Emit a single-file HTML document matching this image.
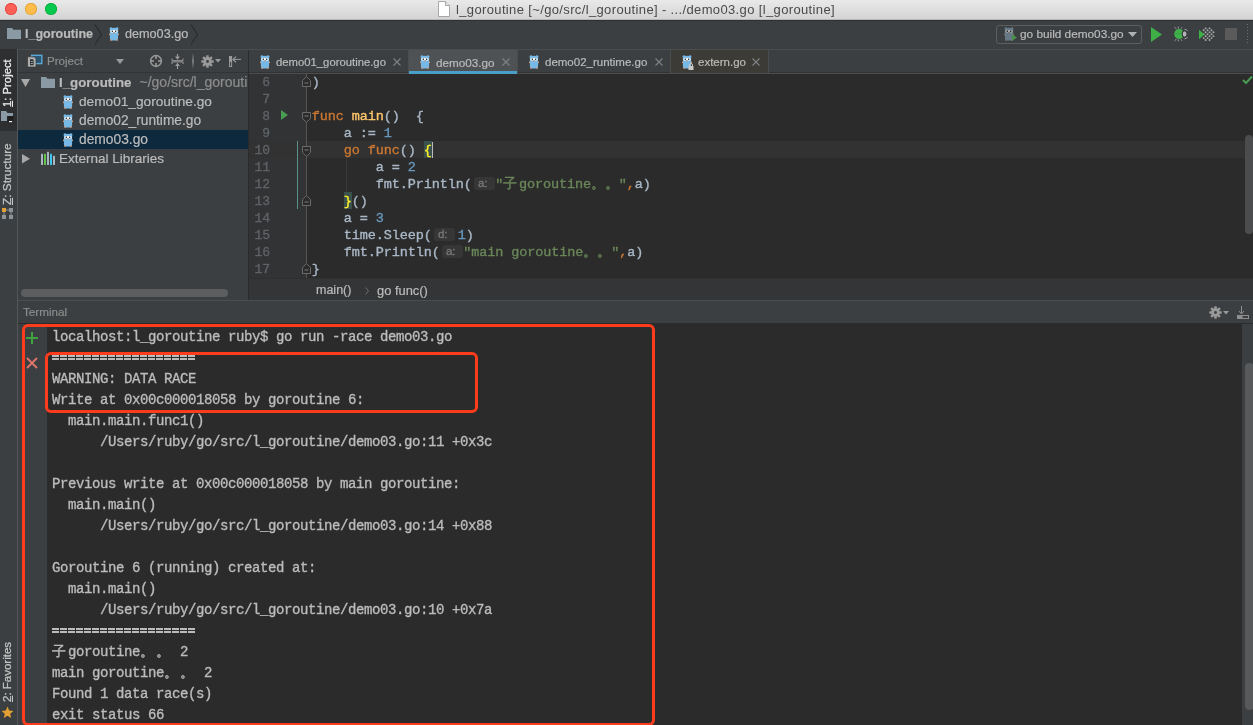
<!DOCTYPE html>
<html><head><meta charset="utf-8">
<style>
*{margin:0;padding:0;box-sizing:border-box}
html,body{width:1253px;height:725px;overflow:hidden;background:#3c3f41;font-family:"Liberation Sans",sans-serif}
.a{position:absolute}
.t{position:absolute;white-space:pre;-webkit-text-stroke:0.2px currentColor}
.m{font-family:"Liberation Mono",monospace}
.code{position:absolute;-webkit-text-stroke:0.35px currentColor;left:311.7px;font-family:"Liberation Mono",monospace;font-size:13.5px;letter-spacing:-0.1px;height:17px;line-height:17px;white-space:pre;color:#a9b7c6}
.ln{position:absolute;-webkit-text-stroke:0.3px currentColor;left:249px;width:21px;text-align:right;font-family:"Liberation Mono",monospace;font-size:13px;height:17px;line-height:17px;color:#606366}
.k{color:#cc7832}.fn{color:#ffc66d}.n{color:#6897bb}.s{color:#6a8759}
.cj{display:inline-block;width:13.9px;text-align:left}.cz{display:inline-block;width:15.7px;text-align:left}
.hint{display:inline-block;width:23.6px;height:13px;position:relative;vertical-align:top}.hint.hd{width:26.1px}.hint.hd b{width:21.4px}
.hint b{position:absolute;left:2.3px;top:1px;width:20.5px;height:13px;border-radius:3px;background:#363636;font-weight:normal;font-family:"Liberation Sans",sans-serif;font-size:11.5px;line-height:13px;color:#787878;padding-left:4px}
.term{position:absolute;-webkit-text-stroke:0.35px currentColor;left:52px;font-family:"Liberation Mono",monospace;font-size:14px;letter-spacing:-0.4px;height:21px;line-height:21px;white-space:pre;color:#bbbbbb}
.tj{display:inline-block;width:16px}
</style></head><body><div id="root" style="position:absolute;left:0;top:0;width:1253px;height:725px;will-change:transform">
<svg width="0" height="0" style="position:absolute">
<defs>
<symbol id="gopher" viewBox="0 0 10 14">
<path d="M1.6 0.3 Q3 0.2 3.3 1 Q5 0.6 6.7 1 Q7 0.2 8.4 0.3 Q9.8 0.6 9.4 2.2 Q9.3 2.6 9.1 2.8 V11 Q9.1 13.6 6.5 13.6 H3.5 Q0.9 13.6 0.9 11 V2.8 Q0.7 2.6 0.6 2.2 Q0.2 0.6 1.6 0.3Z" fill="#76b8e6"/>
<ellipse cx="0.6" cy="7.3" rx="0.7" ry="0.9" fill="#d9a07e"/>
<ellipse cx="9.4" cy="7.3" rx="0.7" ry="0.9" fill="#d9a07e"/>
<ellipse cx="2" cy="13.1" rx="0.9" ry="0.8" fill="#d9a07e"/>
<ellipse cx="8" cy="13.1" rx="0.9" ry="0.8" fill="#d9a07e"/>
<ellipse cx="3" cy="4.2" rx="1.7" ry="1.5" fill="#e8f2f8"/>
<ellipse cx="7" cy="4.2" rx="1.7" ry="1.5" fill="#e8f2f8"/>
<rect x="4.2" y="3" width="1.6" height="2.4" fill="#ffffff"/>
<circle cx="3.3" cy="4.3" r="0.7" fill="#111"/>
<circle cx="6.7" cy="4.3" r="0.7" fill="#111"/>
<ellipse cx="5" cy="5.8" rx="1" ry="0.7" fill="#b89a88"/>
</symbol>
<symbol id="fold" viewBox="0 0 10 11">
<path d="M0.5 0.5 H8.5 V6.5 L4.5 10.3 L0.5 6.5 Z" fill="#2b2b2b" stroke="#6b6b6b" stroke-width="1"/>
<path d="M2.5 4 H6.5" stroke="#7a7a7a" stroke-width="1"/>
</symbol>
<symbol id="foldup" viewBox="0 0 10 11">
<path d="M0.5 10.5 H8.5 V4.5 L4.5 0.7 L0.5 4.5 Z" fill="#2b2b2b" stroke="#6b6b6b" stroke-width="1"/>
<path d="M2.5 7 H6.5" stroke="#7a7a7a" stroke-width="1"/>
</symbol>
<symbol id="gear" viewBox="-6.5 -6.5 13 13"><g fill="#9a9a9a"><circle r="4.4"/><rect x="-1.2" y="-6.2" width="2.4" height="2.6" transform="rotate(0)"/><rect x="-1.2" y="-6.2" width="2.4" height="2.6" transform="rotate(45)"/><rect x="-1.2" y="-6.2" width="2.4" height="2.6" transform="rotate(90)"/><rect x="-1.2" y="-6.2" width="2.4" height="2.6" transform="rotate(135)"/><rect x="-1.2" y="-6.2" width="2.4" height="2.6" transform="rotate(180)"/><rect x="-1.2" y="-6.2" width="2.4" height="2.6" transform="rotate(225)"/><rect x="-1.2" y="-6.2" width="2.4" height="2.6" transform="rotate(270)"/><rect x="-1.2" y="-6.2" width="2.4" height="2.6" transform="rotate(315)"/></g><circle r="1.4" fill="#3c3f41"/></symbol></defs>
</svg>

<!-- ================= title bar ================= -->
<div class="a" style="left:0;top:0;width:1253px;height:20px;background:linear-gradient(#e9e9e9,#d4d4d4);border-bottom:1px solid #b9b9b9"></div>
<div class="a" style="left:5px;top:3px;width:12px;height:12px;border-radius:50%;background:#fe5f57;box-shadow:inset 0 0 0 0.8px #e0443e"></div>
<div class="a" style="left:25px;top:3px;width:12px;height:12px;border-radius:50%;background:#febc4b;box-shadow:inset 0 0 0 0.8px #de9f34"></div>
<div class="a" style="left:45px;top:3px;width:12px;height:12px;border-radius:50%;background:#05c94f;box-shadow:inset 0 0 0 0.8px #12a83a"></div>
<svg class="a" style="left:438px;top:1px" width="12" height="16" viewBox="0 0 12 16"><path d="M0.5 0.5 H7.5 L11.5 4.5 V15.5 H0.5 Z" fill="#fff" stroke="#a8a8a8"/><path d="M7.5 0.5 V4.5 H11.5" fill="#e8e8e8" stroke="#a8a8a8"/></svg>
<div class="t" style="left:456px;top:-0.5px;height:19px;line-height:19px;font-size:13px;letter-spacing:0.36px;color:#4a4a4a;-webkit-text-stroke:0">l_goroutine [~/go/src/l_goroutine] - .../demo03.go [l_goroutine]</div>

<!-- ================= nav bar ================= -->
<div class="a" style="left:0;top:20px;width:1253px;height:29px;background:#3c3f41;border-top:1px solid #2e3032"></div><div class="a" style="left:18px;top:49px;width:1235px;height:1px;background:#4a4c4e"></div>
<svg class="a" style="left:7px;top:28px" width="14" height="11" viewBox="0 0 14 11"><path d="M0 0 H5 L6.5 1.8 H14 V11 H0 Z" fill="#8a9aa4"/></svg>
<div class="t" style="left:25px;top:20px;height:28px;line-height:28px;font-size:12.5px;font-weight:bold;color:#bbbbbb">l_goroutine</div>
<svg class="a" style="left:94px;top:24px" width="9" height="21" viewBox="0 0 9 21"><path d="M1 0.5 L7.5 10.5 L1 20.5" fill="none" stroke="#2a2c2d" stroke-width="1.2"/></svg>
<svg class="a" style="left:109px;top:27px" width="10" height="14"><use href="#gopher"/></svg>
<div class="t" style="left:125px;top:20px;height:28px;line-height:28px;font-size:12.65px;color:#bbbbbb">demo03.go</div>
<svg class="a" style="left:190px;top:24px" width="9" height="21" viewBox="0 0 9 21"><path d="M1 0.5 L7.5 10.5 L1 20.5" fill="none" stroke="#2a2c2d" stroke-width="1.2"/></svg>

<!-- run config -->
<div class="a" style="left:996px;top:25px;width:146px;height:19px;border:1px solid #5c5e60;border-radius:3px;background:#3c3f41"></div>
<svg class="a" style="left:1004px;top:27px;filter:saturate(0.45) brightness(0.68)" width="10" height="14"><use href="#gopher"/></svg>
<svg class="a" style="left:1012px;top:34px" width="5" height="7" viewBox="0 0 5 7"><path d="M0 0 L5 3.5 L0 7Z" fill="#4a8f4c"/></svg>
<div class="t" style="left:1020px;top:25px;height:19px;line-height:19px;font-size:11.8px;color:#bbbbbb">go build demo03.go</div>
<svg class="a" style="left:1128px;top:32px" width="9" height="5" viewBox="0 0 9 5"><path d="M0 0 H9 L4.5 5Z" fill="#afb1b3"/></svg>
<svg class="a" style="left:1151px;top:26.5px" width="11" height="15" viewBox="0 0 11 15"><path d="M0 0 L11 7.5 L0 15Z" fill="#3fae46"/></svg>
<svg class="a" style="left:1173px;top:26px" width="16" height="16" viewBox="0 0 16 16"><g stroke="#a8a8a8" stroke-width="0.9" fill="none"><path d="M1.5 1.2 L3.5 3 M5.3 0.6 V2.6 M9 1.2 L8 2.6 M1.5 14.8 L3.5 13 M5.3 15.4 V13.4 M9 14.8 L8 13.4"/><path d="M11.5 3.2 Q13.8 3.4 14.6 5 M11.5 12.8 Q13.8 12.6 14.6 11"/></g><circle cx="6.2" cy="8" r="5" fill="#3fb14a"/><path d="M1.3 7.6 H10" stroke="#35963e" stroke-width="0.6"/><ellipse cx="11.3" cy="8" rx="2.6" ry="3.4" fill="#2f3133"/><ellipse cx="11.6" cy="8" rx="1.9" ry="2.7" fill="#b4b4b4"/></svg>
<svg class="a" style="left:1199px;top:26.5px" width="16" height="15" viewBox="0 0 16 15"><g fill="#acacac"><circle cx="6.65" cy="1.35" r="0.95"/><circle cx="4.70" cy="3.30" r="0.95"/><circle cx="10.55" cy="1.35" r="0.95"/><circle cx="8.60" cy="3.30" r="0.95"/><circle cx="6.65" cy="5.25" r="0.95"/><circle cx="4.70" cy="7.20" r="0.95"/><circle cx="12.50" cy="3.30" r="0.95"/><circle cx="10.55" cy="5.25" r="0.95"/><circle cx="8.60" cy="7.20" r="0.95"/><circle cx="6.65" cy="9.15" r="0.95"/><circle cx="4.70" cy="11.10" r="0.95"/><circle cx="14.45" cy="5.25" r="0.95"/><circle cx="12.50" cy="7.20" r="0.95"/><circle cx="10.55" cy="9.15" r="0.95"/><circle cx="8.60" cy="11.10" r="0.95"/><circle cx="6.65" cy="13.05" r="0.95"/><circle cx="14.45" cy="9.15" r="0.95"/><circle cx="12.50" cy="11.10" r="0.95"/><circle cx="10.55" cy="13.05" r="0.95"/></g><path d="M0 2.8 L5.6 7.5 L0 12.2Z" fill="#3fae46"/></svg>
<div class="a" style="left:1225px;top:28px;width:12px;height:12px;background:#5a5a5a"></div>
<div class="a" style="left:1247px;top:24px;width:1px;height:21px;background:repeating-linear-gradient(#6e6e6e 0 1px,transparent 1px 3px)"></div>

<!-- ================= left strip ================= -->
<div class="a" style="left:0;top:49px;width:17px;height:676px;background:#3c3f41"></div>
<div class="a" style="left:17px;top:49px;width:1px;height:676px;background:#545658"></div>
<div class="a" style="left:0;top:49px;width:17px;height:82px;background:#2d2f30"></div>
<div class="t" style="left:3px;top:107px;width:47px;height:9px;transform-origin:0 0;transform:rotate(-90deg);font-size:11.3px;line-height:9px;color:#e8e8e8;-webkit-text-stroke:0.3px currentColor"><u style="text-decoration-thickness:1px;text-underline-offset:1px">1</u>: Project</div>
<svg class="a" style="left:0px;top:110px" width="15" height="14" viewBox="0 0 15 14"><path d="M1 1 H6 L7.5 3 H13 V6 H7 V11 H1Z" fill="#8a9aa4"/><rect x="7.5" y="6" width="6" height="6.5" fill="#1e1e1e"/><rect x="9" y="11" width="3.2" height="1.2" fill="#ffffff"/></svg>
<div class="t" style="left:3px;top:205px;width:62px;height:9px;transform-origin:0 0;transform:rotate(-90deg);font-size:11.8px;line-height:9px;color:#c4c4c4;-webkit-text-stroke:0.25px currentColor"><u style="text-decoration-thickness:1px;text-underline-offset:1px">Z</u>: Structure</div>
<svg class="a" style="left:2px;top:208px" width="12" height="12" viewBox="0 0 12 12"><rect x="0" y="0" width="4" height="4" fill="#e2a135"/><rect x="7" y="0" width="4" height="4" fill="#8d9498"/><rect x="0" y="7" width="4" height="4" fill="#8d9498"/><rect x="7" y="7" width="4" height="4" fill="#8d9498"/><path d="M4 2 H7 M2 4 V7 M9 4 V7" stroke="#8d9498"/></svg>
<div class="t" style="left:3px;top:702px;width:60px;height:9px;transform-origin:0 0;transform:rotate(-90deg);font-size:11.5px;line-height:9px;color:#c4c4c4;-webkit-text-stroke:0.25px currentColor"><u style="text-decoration-thickness:1px;text-underline-offset:1px">2</u>: Favorites</div>
<svg class="a" style="left:1px;top:706px" width="13" height="13" viewBox="0 0 24 24"><path d="M12 1 L15.1 8.3 L23 9 L17 14.2 L18.8 22 L12 17.9 L5.2 22 L7 14.2 L1 9 L8.9 8.3Z" fill="#e3a033"/></svg>

<!-- ================= project panel ================= -->
<div class="a" style="left:18px;top:50px;width:231px;height:250px;background:#3c3f41"></div>
<div class="a" style="left:248px;top:50px;width:1px;height:250px;background:#2b2b2b"></div>
<div class="a" style="left:18px;top:72px;width:230px;height:1px;background:#313335"></div>
<!-- header -->
<svg class="a" style="left:27px;top:54px" width="16" height="14" viewBox="0 0 16 14"><rect x="4.6" y="1.3" width="10.2" height="8.3" fill="#2d5672" stroke="#5aa9d6" stroke-width="1.4"/><path d="M0.5 2.8 H7.2 L9 4.6 V13 H0.5Z" fill="#aeaeae" stroke="#2b2b2b" stroke-width="0.6"/><path d="M3 5.3 H5.8 L6.6 6 V11.2 H3Z" fill="#2f3133"/><rect x="3.8" y="7" width="2" height="0.9" fill="#aeaeae"/><rect x="3.8" y="9" width="2" height="0.9" fill="#aeaeae"/></svg>
<div class="t" style="left:47px;top:49px;height:23px;line-height:23px;font-size:11.6px;color:#8d8d8d">Project</div>
<svg class="a" style="left:116px;top:59px" width="8" height="5" viewBox="0 0 8 5"><path d="M0 0 H8 L4 5Z" fill="#9a9a9a"/></svg>
<svg class="a" style="left:149px;top:54px" width="14" height="14" viewBox="0 0 14 14"><circle cx="7" cy="7" r="5.4" fill="none" stroke="#9a9a9a" stroke-width="1.5"/><path d="M7 2 V5 M7 9 V12 M2 7 H5 M9 7 H12" stroke="#9a9a9a" stroke-width="1.6"/></svg>
<svg class="a" style="left:171px;top:54px" width="13" height="15" viewBox="0 0 13 15"><path d="M1 4.5 V6.7 H12 V4.5 M1 10 V7.9 H12 V10" fill="none" stroke="#9a9a9a" stroke-width="1"/><path d="M6.5 0 V3 M6.5 12 V15" stroke="#9a9a9a" stroke-width="1.2"/><path d="M4 2.5 H9 L6.5 5.7Z M4 12 H9 L6.5 8.8Z" fill="#9a9a9a"/></svg>
<div class="a" style="left:192px;top:53px;width:2px;height:16px;background:linear-gradient(#3c3f41,#7a7c7e 50%,#3c3f41)"></div>
<svg class="a" style="left:200.5px;top:54.5px" width="13" height="13"><use href="#gear"/></svg><svg class="a" style="left:215px;top:59px" width="6" height="4" viewBox="0 0 6 4"><path d="M0 0 H6 L3 3.5Z" fill="#9a9a9a"/></svg>
<svg class="a" style="left:228px;top:55px" width="14" height="13" viewBox="0 0 14 13"><rect x="1" y="1" width="3.1" height="11" fill="#9a9a9a"/><rect x="2" y="7" width="1.1" height="4" fill="#3c3f41"/><path d="M5.5 4.4 H13" stroke="#9a9a9a" stroke-width="1"/><path d="M8 1.6 L5 4.4 L8 7.2" fill="none" stroke="#9a9a9a" stroke-width="1.2"/></svg>

<!-- tree -->
<svg class="a" style="left:21px;top:79px" width="9" height="8" viewBox="0 0 9 8"><path d="M0 0 H9 L4.5 8Z" fill="#a8a8a8"/></svg>
<svg class="a" style="left:41px;top:77px" width="14" height="11" viewBox="0 0 14 11"><path d="M0 0 H5 L6.5 1.8 H14 V11 H0 Z" fill="#8a9aa4"/></svg>
<div class="t" style="left:59px;top:73px;height:19px;line-height:19px;font-size:13.3px;font-weight:bold;color:#bbbbbb">l_goroutine</div>
<div class="t" style="left:139.5px;top:72.5px;width:108.5px;overflow:hidden;height:19px;line-height:19px;font-size:14px;color:#8d8d8d">~/go/src/l_goroutine</div>
<svg class="a" style="left:63px;top:95px" width="10" height="14"><use href="#gopher"/></svg>
<div class="t" style="left:79px;top:92px;height:19px;line-height:19px;font-size:13.67px;color:#bbbbbb">demo01_goroutine.go</div>
<svg class="a" style="left:63px;top:114px" width="10" height="14"><use href="#gopher"/></svg>
<div class="t" style="left:79px;top:111px;height:19px;line-height:19px;font-size:13.72px;color:#bbbbbb">demo02_runtime.go</div>
<div class="a" style="left:18px;top:130px;width:230px;height:19px;background:#0d293e"></div>
<svg class="a" style="left:63px;top:133px" width="10" height="14"><use href="#gopher"/></svg>
<div class="t" style="left:79px;top:130px;height:19px;line-height:19px;font-size:13.8px;color:#bbbbbb">demo03.go</div>
<svg class="a" style="left:22px;top:154px" width="8" height="9.5" viewBox="0 0 8 9.5"><path d="M0 0 L8 4.75 L0 9.5Z" fill="#a8a8a8"/></svg>
<svg class="a" style="left:41px;top:151px" width="15" height="14" viewBox="0 0 15 14"><rect x="0" y="2.8" width="2" height="11.2" rx="0.5" fill="#a9b7c1"/><rect x="3" y="2.8" width="2" height="11.2" rx="0.5" fill="#62c34a"/><rect x="6" y="0.8" width="2" height="13.2" rx="0.5" fill="#a9b7c1"/><rect x="9" y="2.8" width="2" height="11.2" rx="0.5" fill="#40c4f0"/><rect x="12" y="4.8" width="2" height="9.2" rx="0.5" fill="#a9b7c1"/></svg>
<div class="t" style="left:59px;top:149px;height:19px;line-height:19px;font-size:13.5px;color:#bbbbbb">External Libraries</div>
<!-- h scrollbar -->
<div class="a" style="left:21px;top:289px;width:207px;height:8px;border-radius:4px;background:#5b5d5f"></div>

<!-- ================= editor ================= -->
<div class="a" style="left:249px;top:49px;width:1004px;height:24px;background:#3c3f41"></div>
<div class="a" style="left:249px;top:72px;width:1004px;height:1px;background:#323232"></div>
<div class="a" style="left:249px;top:73px;width:58px;height:205px;background:#313335"></div>
<div class="a" style="left:307px;top:73px;width:946px;height:205px;background:#2b2b2b"></div>
<div class="a" style="left:249px;top:141px;width:1004px;height:17px;background:#323232"></div>


<!-- tabs -->
<div class="a" style="left:249px;top:49px;width:1004px;height:1px;background:#4a4c4e"></div>
<div class="a" style="left:249px;top:73px;width:1004px;height:1px;background:#4b4d4f"></div>
<div class="a" style="left:408px;top:50px;width:1px;height:23px;background:#4a4c4e"></div>
<div class="a" style="left:409px;top:50px;width:108px;height:24px;background:#4e5254"></div>
<div class="a" style="left:409px;top:71px;width:108px;height:3px;background:#4a9fc8"></div>
<div class="a" style="left:517px;top:50px;width:1px;height:23px;background:#4a4c4e"></div>
<div class="a" style="left:670px;top:50px;width:1px;height:23px;background:#4a4c4e"></div>
<div class="a" style="left:671px;top:50px;width:97px;height:23px;background:#3d3b35"></div>
<div class="a" style="left:768px;top:50px;width:1px;height:23px;background:#4a4c4e"></div>
<svg class="a" style="left:260px;top:55px" width="10" height="14"><use href="#gopher"/></svg>
<div class="t" style="left:276px;top:51px;height:23px;line-height:23px;font-size:11.3px;color:#bbbbbb">demo01_goroutine.go</div>
<svg class="a" style="left:393px;top:58px" width="8" height="8" viewBox="0 0 8 8"><path d="M0.5 0.5 L7.5 7.5 M7.5 0.5 L0.5 7.5" stroke="#7e8385" stroke-width="1.1"/></svg>
<svg class="a" style="left:420px;top:55px" width="10" height="14"><use href="#gopher"/></svg>
<div class="t" style="left:436px;top:51px;height:23px;line-height:23px;font-size:11.7px;color:#bbbbbb">demo03.go</div>
<svg class="a" style="left:502px;top:58px" width="8" height="8" viewBox="0 0 8 8"><path d="M0.5 0.5 L7.5 7.5 M7.5 0.5 L0.5 7.5" stroke="#7e8385" stroke-width="1.1"/></svg>
<svg class="a" style="left:529px;top:55px" width="10" height="14"><use href="#gopher"/></svg>
<div class="t" style="left:545px;top:51px;height:23px;line-height:23px;font-size:11.5px;color:#bbbbbb">demo02_runtime.go</div>
<svg class="a" style="left:655px;top:58px" width="8" height="8" viewBox="0 0 8 8"><path d="M0.5 0.5 L7.5 7.5 M7.5 0.5 L0.5 7.5" stroke="#7e8385" stroke-width="1.1"/></svg>
<svg class="a" style="left:682px;top:55px" width="10" height="14"><use href="#gopher"/></svg>
<svg class="a" style="left:688px;top:63px" width="6" height="7" viewBox="0 0 6 7"><path d="M1.5 3 V2 A1.5 1.5 0 0 1 4.5 2 V3" fill="none" stroke="#c8c8c8"/><rect x="0.5" y="3" width="5" height="4" fill="#c8c8c8"/></svg>
<div class="t" style="left:698px;top:51px;height:23px;line-height:23px;font-size:11.5px;color:#bbbbbb">extern.go</div>
<svg class="a" style="left:752px;top:58px" width="8" height="8" viewBox="0 0 8 8"><path d="M0.5 0.5 L7.5 7.5 M7.5 0.5 L0.5 7.5" stroke="#7e8385" stroke-width="1.1"/></svg>

<!-- gutter -->
<div class="ln" style="top:74px">6</div>
<div class="ln" style="top:91px">7</div>
<div class="ln" style="top:108px">8</div>
<div class="ln" style="top:125px">9</div>
<div class="ln" style="top:142px">10</div>
<div class="ln" style="top:159px">11</div>
<div class="ln" style="top:176px">12</div>
<div class="ln" style="top:193px">13</div>
<div class="ln" style="top:210px">14</div>
<div class="ln" style="top:227px">15</div>
<div class="ln" style="top:244px">16</div>
<div class="ln" style="top:261px">17</div>
<svg class="a" style="left:281px;top:110px" width="7" height="10" viewBox="0 0 7 10"><path d="M0 0 L7 5 L0 10Z" fill="#499c54"/></svg>
<div class="a" style="left:297px;top:141px;width:1.2px;height:68px;background:#5a8f85"></div>
<div class="a" style="left:306px;top:73px;width:1px;height:205px;background:#555555"></div>
<svg class="a" style="left:302px;top:76px" width="10" height="11"><use href="#foldup"/></svg>
<svg class="a" style="left:302px;top:112px" width="10" height="11"><use href="#fold"/></svg>
<svg class="a" style="left:302px;top:146px" width="10" height="11"><use href="#fold"/></svg>
<svg class="a" style="left:302px;top:195px" width="10" height="11"><use href="#foldup"/></svg>
<svg class="a" style="left:302px;top:263px" width="10" height="11"><use href="#foldup"/></svg>
<!-- indent guide -->
<div class="a" style="left:346px;top:158px;width:1px;height:34px;background:#393939"></div>
<!-- code -->
<div class="a" style="left:423.7px;top:141px;width:8px;height:17px;background:#3b514d"></div>
<div class="a" style="left:343.7px;top:192px;width:8px;height:17px;background:#3b514d"></div>
<div class="code" style="top:74px">)</div>
<div class="code" style="top:108px"><span class="k">func</span> <span class="fn">main</span>()  {</div>
<div class="code" style="top:125px">    a := <span class="n">1</span></div>
<div class="code" style="top:142px">    <span class="k">go func</span>() <span style="color:#ffef28">{</span></div>
<div class="a" style="left:431.5px;top:142px;width:1.6px;height:16px;background:#bbbbbb"></div>
<div class="code" style="top:159px">        a = <span class="n">2</span></div>
<div class="code" style="top:176px">        fmt.Println(<span class="hint"><b>a:</b></span><span class="s">"<span class="cz">子</span>goroutine<span class="cj">。</span><span class="cj">。</span>"</span><span class="k">,</span>a)</div>
<div class="code" style="top:193px">    <span style="color:#ffef28">}</span>()</div>
<div class="code" style="top:210px">    a = <span class="n">3</span></div>
<div class="code" style="top:227px">    time.Sleep(<span class="hint hd"><b>d:</b></span><span class="n">1</span>)</div>
<div class="code" style="top:244px">    fmt.Println(<span class="hint"><b>a:</b></span><span class="s">"main goroutine<span class="cj">。</span><span class="cj">。</span>"</span><span class="k">,</span>a)</div>
<div class="code" style="top:261px">}</div>
<!-- right markers -->
<svg class="a" style="left:1242px;top:75px" width="11" height="10" viewBox="0 0 11 10"><path d="M1 5 L4 8 L10 1.5" fill="none" stroke="#499c54" stroke-width="2"/></svg>
<div class="a" style="left:1245px;top:135px;width:8px;height:99px;border-radius:4px;background:#4a4c4e"></div>

<!-- breadcrumbs -->
<div class="a" style="left:249px;top:278px;width:1004px;height:22px;background:#333537;border-top:1px solid #2e3032"></div>
<div class="t" style="left:316px;top:280px;height:21px;line-height:21px;font-size:12.5px;color:#bbbbbb">main()</div>
<svg class="a" style="left:365px;top:287px" width="4" height="8" viewBox="0 0 4 8"><path d="M0.5 0.5 L3.5 4 L0.5 7.5" fill="none" stroke="#6e6e6e"/></svg>
<div class="t" style="left:377px;top:280px;height:21px;line-height:21px;font-size:12.9px;color:#bbbbbb">go func()</div>

<!-- ================= terminal ================= -->
<div class="a" style="left:18px;top:300px;width:1235px;height:1px;background:#4b4d4f"></div>
<div class="a" style="left:18px;top:301px;width:1235px;height:23px;background:#3c3f41;border-bottom:1px solid #2b2b2b"></div>
<div class="t" style="left:23px;top:301px;height:22px;line-height:22px;font-size:11.7px;color:#8c8c8c">Terminal</div>
<div class="a" style="left:18px;top:324px;width:29px;height:401px;background:#3c3f41"></div>
<div class="a" style="left:47px;top:324px;width:1206px;height:401px;background:#2b2b2b"></div>


<!-- terminal text -->
<div class="term" style="top:327px">localhost:l_goroutine ruby$ go run -race demo03.go</div>
<div class="a" style="left:51.8px;top:355.3px;width:144px;height:1.5px;background:repeating-linear-gradient(90deg,#bbbbbb 0 7.2px,transparent 7.2px 8px)"></div><div class="a" style="left:51.8px;top:358.3px;width:144px;height:1.5px;background:repeating-linear-gradient(90deg,#bbbbbb 0 7.2px,transparent 7.2px 8px)"></div>
<div class="term" style="top:369px">WARNING: DATA RACE</div>
<div class="term" style="top:390px">Write at 0x00c000018058 by goroutine 6:</div>
<div class="term" style="top:411px">  main.main.func1()</div>
<div class="term" style="top:432px">      /Users/ruby/go/src/l_goroutine/demo03.go:11 +0x3c</div>
<div class="term" style="top:474px">Previous write at 0x00c000018058 by main goroutine:</div>
<div class="term" style="top:495px">  main.main()</div>
<div class="term" style="top:516px">      /Users/ruby/go/src/l_goroutine/demo03.go:14 +0x88</div>
<div class="term" style="top:558px">Goroutine 6 (running) created at:</div>
<div class="term" style="top:579px">  main.main()</div>
<div class="term" style="top:600px">      /Users/ruby/go/src/l_goroutine/demo03.go:10 +0x7a</div>
<div class="a" style="left:51.8px;top:628.3px;width:144px;height:1.5px;background:repeating-linear-gradient(90deg,#bbbbbb 0 7.2px,transparent 7.2px 8px)"></div><div class="a" style="left:51.8px;top:631.3px;width:144px;height:1.5px;background:repeating-linear-gradient(90deg,#bbbbbb 0 7.2px,transparent 7.2px 8px)"></div>
<div class="term" style="top:642px"><span class="tj">子</span>goroutine<span class="tj">。</span><span class="tj">。</span> 2</div>
<div class="term" style="top:663px">main goroutine<span class="tj">。</span><span class="tj">。</span> 2</div>
<div class="term" style="top:684px">Found 1 data race(s)</div>
<div class="term" style="top:705px">exit status 66</div>
<svg class="a" style="left:26px;top:332px" width="12" height="12" viewBox="0 0 12 12"><path d="M6 0 V12 M0 6 H12" stroke="#3fa33f" stroke-width="2"/></svg>
<svg class="a" style="left:26px;top:357px" width="12" height="12" viewBox="0 0 12 12"><path d="M1 1 L11 11 M11 1 L1 11" stroke="#e0766a" stroke-width="1.8"/></svg>
<!-- terminal scrollbar -->
<div class="a" style="left:1242px;top:324px;width:11px;height:401px;background:#3c3f41"></div>
<div class="a" style="left:1245px;top:363px;width:8.5px;height:347px;border-radius:4.25px;background:#58595b"></div>
<!-- terminal toolbar right -->
<svg class="a" style="left:1208.5px;top:306px" width="13" height="13"><use href="#gear"/></svg><svg class="a" style="left:1222.5px;top:310.5px" width="6" height="4" viewBox="0 0 6 4"><path d="M0 0 H6 L3 3.5Z" fill="#9a9a9a"/></svg>
<svg class="a" style="left:1237px;top:306px" width="12" height="13" viewBox="0 0 12 13"><path d="M4.5 0 V7 M2 5 L4.5 8 L7 5" fill="none" stroke="#8f8f8f" stroke-width="1"/><rect x="0.5" y="9.5" width="11" height="3" fill="none" stroke="#8f8f8f"/><rect x="0.5" y="9.5" width="5" height="3" fill="#8f8f8f"/></svg>
<!-- red annotations -->
<div class="a" style="left:22px;top:324px;width:633px;height:402px;border:3px solid #fc3c1d;border-radius:6px"></div>
<div class="a" style="left:45px;top:352px;width:433px;height:61px;border:3px solid #fc3c1d;border-radius:6px"></div>

</div></body></html>
